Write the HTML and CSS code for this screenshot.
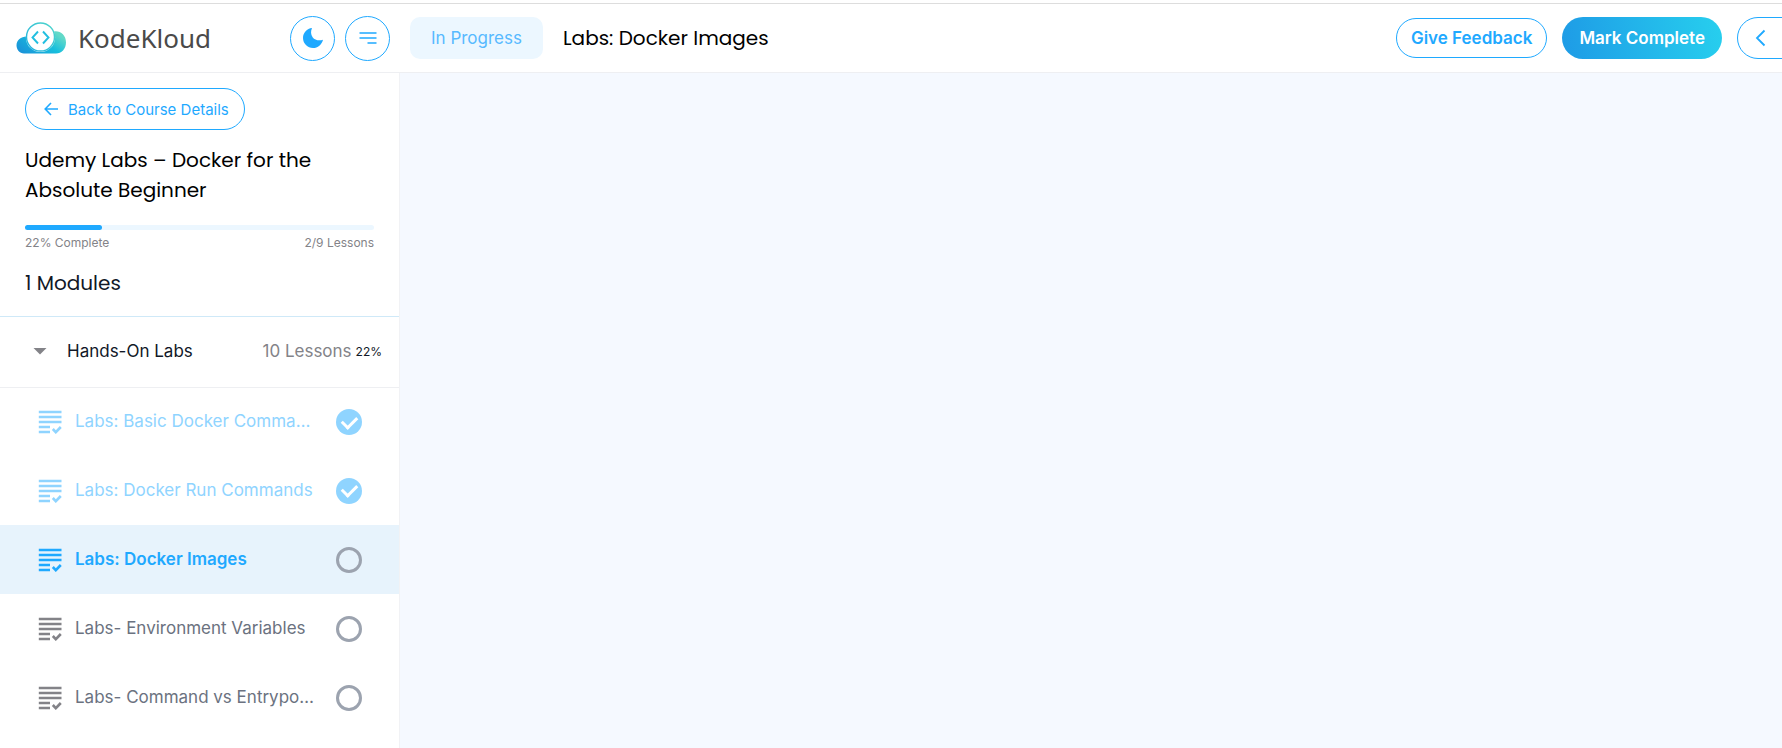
FILE: index.html
```html
<!DOCTYPE html>
<html lang="en">
  <head>
    <meta charset="UTF-8" />
    <meta name="viewport" content="width=device-width, initial-scale=1.0" />
    <title>Labs: Docker Images - KodeKloud</title>
    <link rel="stylesheet" href="styles.css">
  </head>
  <body>
    <!-- Shared icon -->
    <svg class="sprite" aria-hidden="true">
      <symbol id="lab-icon" viewBox="0 0 24 24">
        <path fill="none" stroke="currentColor" stroke-width="2.5" d="M0.800 2h22.700M0.800 7h22.700M0.800 12h22.700M0.800 17h11.200M0.800 22h11.200" />
        <path fill="none" stroke="currentColor" stroke-width="2.6" d="M14.800 19l3 3.200 5-5.200" />
      </symbol>
    </svg>

    <!-- Top bar -->
    <header class="topbar">
      <div class="brand">
        <a href="#" class="logo">
          <svg width="50" height="32" viewBox="0 0 50 32" aria-hidden="true">
            <defs>
              <linearGradient id="cloud" x1="0" y1="1" x2="1" y2="0.4">
                <stop offset="0" stop-color="#1a8cd8" />
                <stop offset="0.65" stop-color="#17bfdd" />
                <stop offset="1" stop-color="#62d9c8" />
              </linearGradient>
              <linearGradient id="ring" x1="0" y1="1" x2="1" y2="0">
                <stop offset="0" stop-color="#1fb0e0" />
                <stop offset="1" stop-color="#4fd6cb" />
              </linearGradient>
            </defs>
            <path fill="url(#cloud)" d="M8 31.500C3.500 31.500 0.500 27.500 0.500 23.300C0.500 18 5 14.500 10.500 14.500L36 10C43 7.500 50 12.500 50 20.500C50 27 45.500 31.500 40 31.500Z" />
            <circle cx="24.500" cy="15.500" r="14.600" fill="#fff" />
            <circle cx="24.500" cy="15" r="14" fill="none" stroke="url(#ring)" stroke-width="1.400" />
            <path fill="none" stroke="#22bfe0" stroke-width="1.900" d="M22 9.500L16.500 15.500L22 21.500M27 9.500L32.500 15.500L27 21.500" />
          </svg>
          <span>KodeKloud</span>
        </a>
        <button class="icon-button" aria-label="Dark mode">
          <svg width="22" height="22" viewBox="0 0 22 22">
            <path fill="currentColor" d="M10 1C5 1.500 1 5.800 1 11c0 5.500 4.500 10 10 10 4.800 0 8.900-3.400 10-8.300-4 1.300-8 .6-10.400-2.500C8.700 7.600 8.600 4.200 10 1z" />
          </svg>
        </button>
        <button class="icon-button" aria-label="Toggle menu">
          <svg width="18" height="14" viewBox="0 0 18 14">
            <path fill="none" stroke="currentColor" stroke-width="1.400" d="M0.500 2h17M0.500 7h17M8.500 12h9" />
          </svg>
        </button>
      </div>
      <span class="status">In Progress</span>
      <h1>Labs: Docker Images</h1>
      <div class="actions">
        <button class="feedback">Give Feedback</button>
        <button class="complete">Mark Complete</button>
        <button class="previous" aria-label="Previous lesson">
          <svg width="12" height="18" viewBox="0 0 12 18">
            <path fill="none" stroke="currentColor" stroke-width="1.800" d="M9.500 1.500L2 9l7.500 7.500" />
          </svg>
        </button>
      </div>
    </header>

    <div class="layout">
      <aside class="sidebar">
        <div class="course">
          <a href="#" class="back">
            <svg width="14" height="14" viewBox="0 0 14 14" aria-hidden="true">
              <path fill="none" stroke="currentColor" stroke-width="1.600" d="M14 7H1.500M7 1L1.200 7L7 13" />
            </svg>
            Back to Course Details
          </a>
          <h2>Udemy Labs – Docker for the Absolute Beginner</h2>
          <div class="progress">
            <div class="progress-fill" style="width: 22%"></div>
          </div>
          <div class="progress-text">
            <span>22% Complete</span>
            <span>2/9 Lessons</span>
          </div>
          <h3>1 Modules</h3>
        </div>

        <button class="module">
          <svg width="14" height="8" viewBox="0 0 14 8" aria-hidden="true">
            <path fill="#838388" d="M0.500 1h13L7 7.500z" />
          </svg>
          <span class="module-name">Hands-On Labs</span>
          <span class="module-count">10 Lessons</span>
          <span class="module-percent">22%</span>
        </button>

        <ul class="lessons">
          <li class="done">
            <svg width="24" height="24" aria-hidden="true"><use href="#lab-icon" /></svg>
            <label for="lesson1">Labs: Basic Docker Commands</label>
            <input type="checkbox" id="lesson1" checked />
          </li>
          <li class="done">
            <svg width="24" height="24" aria-hidden="true"><use href="#lab-icon" /></svg>
            <label for="lesson2">Labs: Docker Run Commands</label>
            <input type="checkbox" id="lesson2" checked />
          </li>
          <li class="active">
            <svg width="24" height="24" aria-hidden="true"><use href="#lab-icon" /></svg>
            <label for="lesson3">Labs: Docker Images</label>
            <input type="checkbox" id="lesson3" />
          </li>
          <li>
            <svg width="24" height="24" aria-hidden="true"><use href="#lab-icon" /></svg>
            <label for="lesson4">Labs- Environment Variables</label>
            <input type="checkbox" id="lesson4" />
          </li>
          <li>
            <svg width="24" height="24" aria-hidden="true"><use href="#lab-icon" /></svg>
            <label for="lesson5">Labs- Command vs Entrypoint</label>
            <input type="checkbox" id="lesson5" />
          </li>
        </ul>
      </aside>
      <main class="content"></main>
    </div>
  </body>
</html>
```
FILE: styles.css
```css
* {
  box-sizing: border-box;
}
body {
  font-family: "Inter", sans-serif;
  background-color: #ffffff;
  color: #111827;
  margin: 0;
  padding-top: 3px;
  min-height: 100vh;
  display: flex;
  flex-direction: column;
  overflow-x: hidden;
}
h1,
h2,
h3 {
  font-family: "Poppins", "Inter", sans-serif;
  font-size: 20px;
  font-weight: 400;
  line-height: 30px;
  margin: 0;
  color: #000000;
}
button {
  font-family: inherit;
  background-color: #ffffff;
  cursor: pointer;
}
a {
  text-decoration: none;
}
svg {
  flex-shrink: 0;
}
.sprite {
  display: none;
}

/* Top bar */
.topbar {
  height: 70px;
  border-top: 1px solid #dddddd;
  border-bottom: 1px solid #eeeff2;
  display: flex;
  align-items: center;
  overflow: hidden;
}
.brand {
  width: 390px;
  margin-right: 20px;
  padding-left: 16px;
  display: flex;
  align-items: center;
  gap: 10px;
  flex-shrink: 0;
}
.logo {
  margin-right: auto;
  display: flex;
  align-items: center;
  gap: 12px;
  font-family: "Noto Sans", sans-serif;
  font-size: 26px;
  line-height: 36px;
  color: #4a4a4a;
}
.icon-button {
  width: 45px;
  height: 45px;
  padding: 0;
  border: 1px solid #1fa9ff;
  border-radius: 50%;
  color: #1fa9ff;
  display: flex;
  align-items: center;
  justify-content: center;
}
.status {
  height: 42px;
  padding: 0 21px;
  margin-right: 20px;
  border-radius: 10px;
  background-color: #ecf7ff;
  color: #57baff;
  font-size: 17px;
  line-height: 42px;
  white-space: nowrap;
}
.topbar h1 {
  white-space: nowrap;
}
.actions {
  margin-left: auto;
  margin-right: -35px;
  display: flex;
  align-items: center;
  gap: 15px;
}
.actions button {
  height: 42px;
  border: 1px solid #1fa9ff;
  border-radius: 21px;
  color: #1fa9ff;
  font-size: 17px;
  font-weight: 600;
  white-space: nowrap;
}
.actions .feedback {
  height: 40px;
  padding: 0 14px;
}
.actions .complete {
  padding: 0 17px;
  border: none;
  background: linear-gradient(80deg, #1e9be6, #27cfee);
  color: #ffffff;
}
.actions .previous {
  width: 80px;
  padding: 0 17px;
  display: flex;
  align-items: center;
}

/* Page body */
.layout {
  flex: 1;
  display: grid;
  grid-template-columns: 400px 1fr;
}
.content {
  background-color: #f5f9ff;
}
.sidebar {
  border-right: 1px solid #f1f2f5;
}
.course {
  padding: 15px 25px 18px;
  border-bottom: 1px solid #cfe9f8;
}
.back {
  width: fit-content;
  height: 42px;
  padding: 0 15px 0 18px;
  border: 1px solid #1fa9ff;
  border-radius: 21px;
  color: #1fa9ff;
  font-size: 15px;
  display: flex;
  align-items: center;
  gap: 10px;
}
.course h2 {
  margin: 15px 0 20px;
}
.progress {
  height: 5px;
  border-radius: 3px;
  background-color: #ecf7ff;
}
.progress-fill {
  height: 100%;
  border-radius: 3px;
  background-color: #1fa9ff;
}
.progress-text {
  margin: 4px 0 16px;
  display: flex;
  justify-content: space-between;
  font-size: 12px;
  line-height: 18px;
  color: #838388;
}
.course h3 {
  color: #111827;
}

/* Module row */
.module {
  width: 100%;
  height: 70px;
  padding: 0 17px 2px 33px;
  border: none;
  display: flex;
  align-items: center;
  font-size: 17px;
  color: #111827;
}
.module-name {
  margin-left: 20px;
  margin-right: auto;
}
.module-count {
  color: #838388;
}
.module-percent {
  margin-left: 4px;
  font-size: 12px;
}

/* Lessons */
.lessons {
  list-style: none;
  margin: 0;
  padding: 0;
}
.lessons li {
  height: 69px;
  padding: 0 37px 0 38px;
  display: flex;
  align-items: center;
  color: #838388;
}
.lessons li:first-child {
  border-top: 1px solid #eeeff2;
}
.lessons label {
  flex: 1;
  margin: 0 18px 0 13px;
  padding-bottom: 2px;
  font-size: 17px;
  line-height: 28px;
  color: #6b7280;
  white-space: nowrap;
  overflow: hidden;
  text-overflow: ellipsis;
}
.lessons input {
  appearance: none;
  width: 26px;
  height: 26px;
  margin: 0;
  border: 3px solid #9ca3af;
  border-radius: 50%;
  display: flex;
  align-items: center;
  justify-content: center;
}
.lessons input:checked {
  border: none;
  background-color: #8fd4ff;
}
.lessons input:checked::after {
  content: "";
  width: 12px;
  height: 7px;
  margin-bottom: 3px;
  border-left: 3px solid #ffffff;
  border-bottom: 3px solid #ffffff;
  transform: rotate(-45deg);
}
.lessons .done,
.lessons .done label {
  color: #8fd4ff;
}
.lessons .active {
  background-color: #e7f3fc;
}
.lessons .active,
.lessons .active label {
  color: #1fa9ff;
}
.lessons .active label {
  font-weight: 600;
}
```
